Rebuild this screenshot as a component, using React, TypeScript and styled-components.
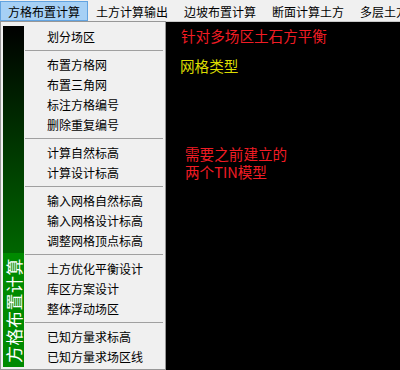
import styled, { createGlobalStyle } from "styled-components";

const GlobalStyle = createGlobalStyle`
  body {
    margin: 0;
    background: #000;
    font-family: "Noto Sans CJK SC", "Noto Sans", sans-serif;
  }
`;

const Window = styled.div`
  position: relative;
  width: 400px;
  height: 370px;
  display: flex;
  flex-direction: column;
  overflow: hidden;
  background: #000;
`;

const MenuBar = styled.div`
  height: 21px;
  display: flex;
  align-items: stretch;
  background: #f0f0f0;
  border-bottom: 1px solid #c8c8c8;
  white-space: nowrap;
`;

const MenuBarItem = styled.div<{ $active?: boolean }>`
  display: flex;
  align-items: center;
  padding: 0 7px;
  margin-top: 1px;
  font-size: 12px;
  color: #000;
  box-sizing: border-box;
  border: 1px solid ${(p) => (p.$active ? "#62a3e0" : "transparent")};
  background: ${(p) => (p.$active ? "#a6d0f5" : "transparent")};
`;

const Canvas = styled.div`
  flex: 1;
  background: #000;
  padding: 5px 0 0 181px;
  font-size: 14.6px;
  line-height: 18px;
`;

const Note = styled.div<{ $color: string; $top: number; $indent?: number }>`
  color: ${(p) => p.$color};
  height: 18px;
  margin-top: ${(p) => p.$top}px;
  margin-left: ${(p) => p.$indent ?? 0}px;
  white-space: nowrap;
`;

const Dropdown = styled.div`
  position: absolute;
  left: 0;
  top: 21px;
  width: 166px;
  height: 349px;
  box-sizing: border-box;
  display: flex;
  background: #f0f0f0;
  border: 1px solid #979797;
  padding: 4px 2px 2px 2px;
`;

const Strip = styled.div`
  width: 21px;
  display: flex;
  flex-direction: column;
`;

const StripFade = styled.div`
  flex: 1;
  background: linear-gradient(#000000, #006600);
`;

const StripTitle = styled.div`
  height: 114px;
  background: #008a00;
  display: flex;
  align-items: center;
  justify-content: center;
`;

const StripText = styled.span`
  writing-mode: vertical-rl;
  text-orientation: sideways;
  transform: rotate(180deg);
  color: #fff;
  font-size: 17px;
  letter-spacing: 0.5px;
  line-height: 21px;
  white-space: nowrap;
`;

const Items = styled.div`
  flex: 1;
  display: flex;
  flex-direction: column;
`;

const Item = styled.div`
  height: 20px;
  display: flex;
  align-items: center;
  padding-left: 23px;
  font-size: 12px;
  color: #000;
  white-space: nowrap;
`;

const Separator = styled.div`
  height: 8px;
  margin: 0 0 0 1px;
  display: flex;
  align-items: center;
  &::after {
    content: "";
    flex: 1;
    height: 1px;
    margin-top: 1px;
    background: #a0a0a0;
  }
`;

const groups = [
  ["划分场区"],
  ["布置方格网", "布置三角网", "标注方格编号", "删除重复编号"],
  ["计算自然标高", "计算设计标高"],
  ["输入网格自然标高", "输入网格设计标高", "调整网格顶点标高"],
  ["土方优化平衡设计", "库区方案设计", "整体浮动场区"],
  ["已知方量求标高", "已知方量求场区线"],
];

const menus = ["方格布置计算", "土方计算输出", "边坡布置计算", "断面计算土方", "多层土方计算"];

export default function App() {
  return (
    <Window>
      <GlobalStyle />
      <MenuBar>
        {menus.map((m, i) => (
          <MenuBarItem key={m} $active={i === 0}>
            {m}
          </MenuBarItem>
        ))}
      </MenuBar>

      <Canvas>
        <Note $color="#f01c24" $top={0}>针对多场区土石方平衡</Note>
        <Note $color="#dcdc00" $top={12} $indent={-1}>网格类型</Note>
        <Note $color="#f01c24" $top={70} $indent={4}>需要之前建立的</Note>
        <Note $color="#f01c24" $top={0} $indent={4}>两个TIN模型</Note>
      </Canvas>

      <Dropdown>
        <Strip>
          <StripFade />
          <StripTitle>
            <StripText>方格布置计算</StripText>
          </StripTitle>
        </Strip>
        <Items>
          {groups.map((g, gi) => (
            <div key={gi}>
              {gi > 0 && <Separator />}
              {g.map((label) => (
                <Item key={label}>{label}</Item>
              ))}
            </div>
          ))}
        </Items>
      </Dropdown>
    </Window>
  );
}
